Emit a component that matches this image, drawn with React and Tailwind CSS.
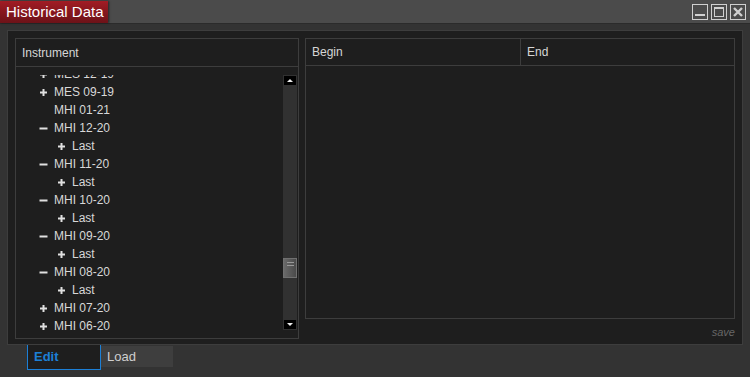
import React from "react";

const rows = [
  { label: "MES 12-19", sign: "+", level: 0 },
  { label: "MES 09-19", sign: "+", level: 0 },
  { label: "MHI 01-21", sign: "", level: 0 },
  { label: "MHI 12-20", sign: "−", level: 0 },
  { label: "Last", sign: "+", level: 1 },
  { label: "MHI 11-20", sign: "−", level: 0 },
  { label: "Last", sign: "+", level: 1 },
  { label: "MHI 10-20", sign: "−", level: 0 },
  { label: "Last", sign: "+", level: 1 },
  { label: "MHI 09-20", sign: "−", level: 0 },
  { label: "Last", sign: "+", level: 1 },
  { label: "MHI 08-20", sign: "−", level: 0 },
  { label: "Last", sign: "+", level: 1 },
  { label: "MHI 07-20", sign: "+", level: 0 },
  { label: "MHI 06-20", sign: "+", level: 0 },
];

const Sign = ({ sign }) => {
  if (sign === "+")
    return (
      <svg width="7" height="7" viewBox="0 0 7 7" className="shrink-0">
        <rect x="2.5" y="0" width="2" height="7" fill="#e0e0e0" />
        <rect x="0" y="2.5" width="7" height="2" fill="#e0e0e0" />
      </svg>
    );
  if (sign === "−")
    return (
      <svg width="7" height="7" viewBox="0 0 7 7" className="shrink-0 overflow-visible">
        <rect x="-0.5" y="2.5" width="8" height="2" fill="#e0e0e0" />
      </svg>
    );
  return <span className="w-[7px] shrink-0" />;
};

const WinButtons = () => (
  <div className="flex gap-[3px] pr-[4px]">
    <div className="w-[16px] h-[16px] border border-[#d0d0d0] flex items-end justify-center pb-[3px]">
      <div className="w-[10px] h-[2px] bg-[#d0d0d0]" />
    </div>
    <div className="w-[16px] h-[16px] border border-[#d0d0d0] flex items-center justify-center">
      <div className="w-[10px] h-[10px] border border-[#d0d0d0] border-t-2" />
    </div>
    <div className="w-[16px] h-[16px] border border-[#d0d0d0] flex items-center justify-center">
      <svg width="10" height="10" viewBox="0 0 10 10">
        <path d="M1 1 L9 9 M9 1 L1 9" stroke="#d0d0d0" strokeWidth="2.4" />
      </svg>
    </div>
  </div>
);

export default function App() {
  return (
    <div
      className="w-[750px] h-[377px] bg-[#333333] flex flex-col overflow-hidden"
      style={{ fontFamily: '"Liberation Sans", Arial, sans-serif' }}
    >
      {/* title bar */}
      <div className="h-[24px] shrink-0 bg-[#4b4b4b] border-b border-[#2b2b2b] flex items-center justify-between">
        <div className="h-[22px] mt-[1px] ml-0 w-[108px] bg-gradient-to-b from-[#a11c24] to-[#6d1218] text-white text-[15px] leading-[22px] pl-[6px] shadow-[1px_0_2px_rgba(0,0,0,0.5)]">
          Historical Data
        </div>
        <WinButtons />
      </div>

      {/* body */}
      <div className="pt-[6px] px-[7px] flex flex-col">
        <div className="h-[315px] bg-[#1e1e1e] border border-[#3d3d3d] flex flex-col px-[7px] pt-[7px]">
          <div className="flex gap-[6px]">
            {/* left tree panel */}
            <div className="w-[284px] h-[301px] border border-[#3d3d3d] flex flex-col">
              <div className="h-[28px] border-b border-[#3d3d3d] flex items-center pl-[6px] text-[12px] text-[#d6d6d6]">
                Instrument
              </div>
              <div className="flex-1 flex overflow-hidden">
                <div className="flex-1 overflow-hidden mt-[8px] mb-[6px]">
                  <div className="-mt-[10px]">
                    {rows.map((r, i) => (
                      <div
                        key={i}
                        className={`h-[18px] flex items-center gap-[7px] text-[12px] text-[#d8d8d8] ${
                          r.level ? "pl-[42px]" : "pl-[24px]"
                        }`}
                      >
                        <Sign sign={r.sign} />
                        <span>{r.label}</span>
                      </div>
                    ))}
                  </div>
                </div>
                {/* scrollbar */}
                <div className="w-[14px] mr-[1px] my-[8px] bg-[#313131] flex flex-col justify-between items-center">
                  <div className="w-[12px] h-[9px] bg-black flex items-center justify-center mt-[1px]">
                    <svg width="6" height="4" viewBox="0 0 6 4">
                      <path d="M3 0 L6 3 L0 3 Z" fill="#eee" />
                    </svg>
                  </div>
                  <div className="w-[14px] h-[20px] mt-[173px] border border-[#707070] bg-gradient-to-r from-[#6a6a6a] to-[#4a4a4a] flex flex-col items-end pr-[2px] pt-[3px] gap-[2px]">
                    <div className="w-[7px] h-px bg-[#999]" />
                    <div className="w-[7px] h-px bg-[#999]" />
                  </div>
                  <div className="flex-1" />
                  <div className="w-[12px] h-[9px] bg-black flex items-center justify-center mb-[1px]">
                    <svg width="6" height="4" viewBox="0 0 6 4">
                      <path d="M0 0 L6 0 L3 3 Z" fill="#eee" />
                    </svg>
                  </div>
                </div>
              </div>
            </div>

            {/* right panel */}
            <div className="flex-1 flex flex-col">
              <div className="h-[281px] border border-[#3d3d3d] flex flex-col">
                <div className="h-[27px] border-b border-[#3d3d3d] flex text-[12px] text-[#d6d6d6]">
                  <div className="w-[215px] border-r border-[#3d3d3d] flex items-center pl-[6px]">Begin</div>
                  <div className="flex items-center pl-[6px]">End</div>
                </div>
              </div>
              <div className="text-right pr-[0px] pt-[6px] text-[11px] italic text-[#676767] leading-[14px]">
                save
              </div>
            </div>
          </div>
        </div>

        {/* bottom tabs */}
        <div className="flex items-start pl-[20px]">
          <div className="w-[74px] h-[25px] border-x border-b border-[#1c7fd6] bg-[#1e1e1e] text-[#1c7fd6] font-bold text-[13px] flex items-center pl-[6px]">
            Edit
          </div>
          <div className="w-[72px] h-[21px] mt-[1px] bg-[#3e3e3e] text-[#cfcfcf] text-[13px] flex items-center pl-[6px]">
            Load
          </div>
        </div>
      </div>
    </div>
  );
}
